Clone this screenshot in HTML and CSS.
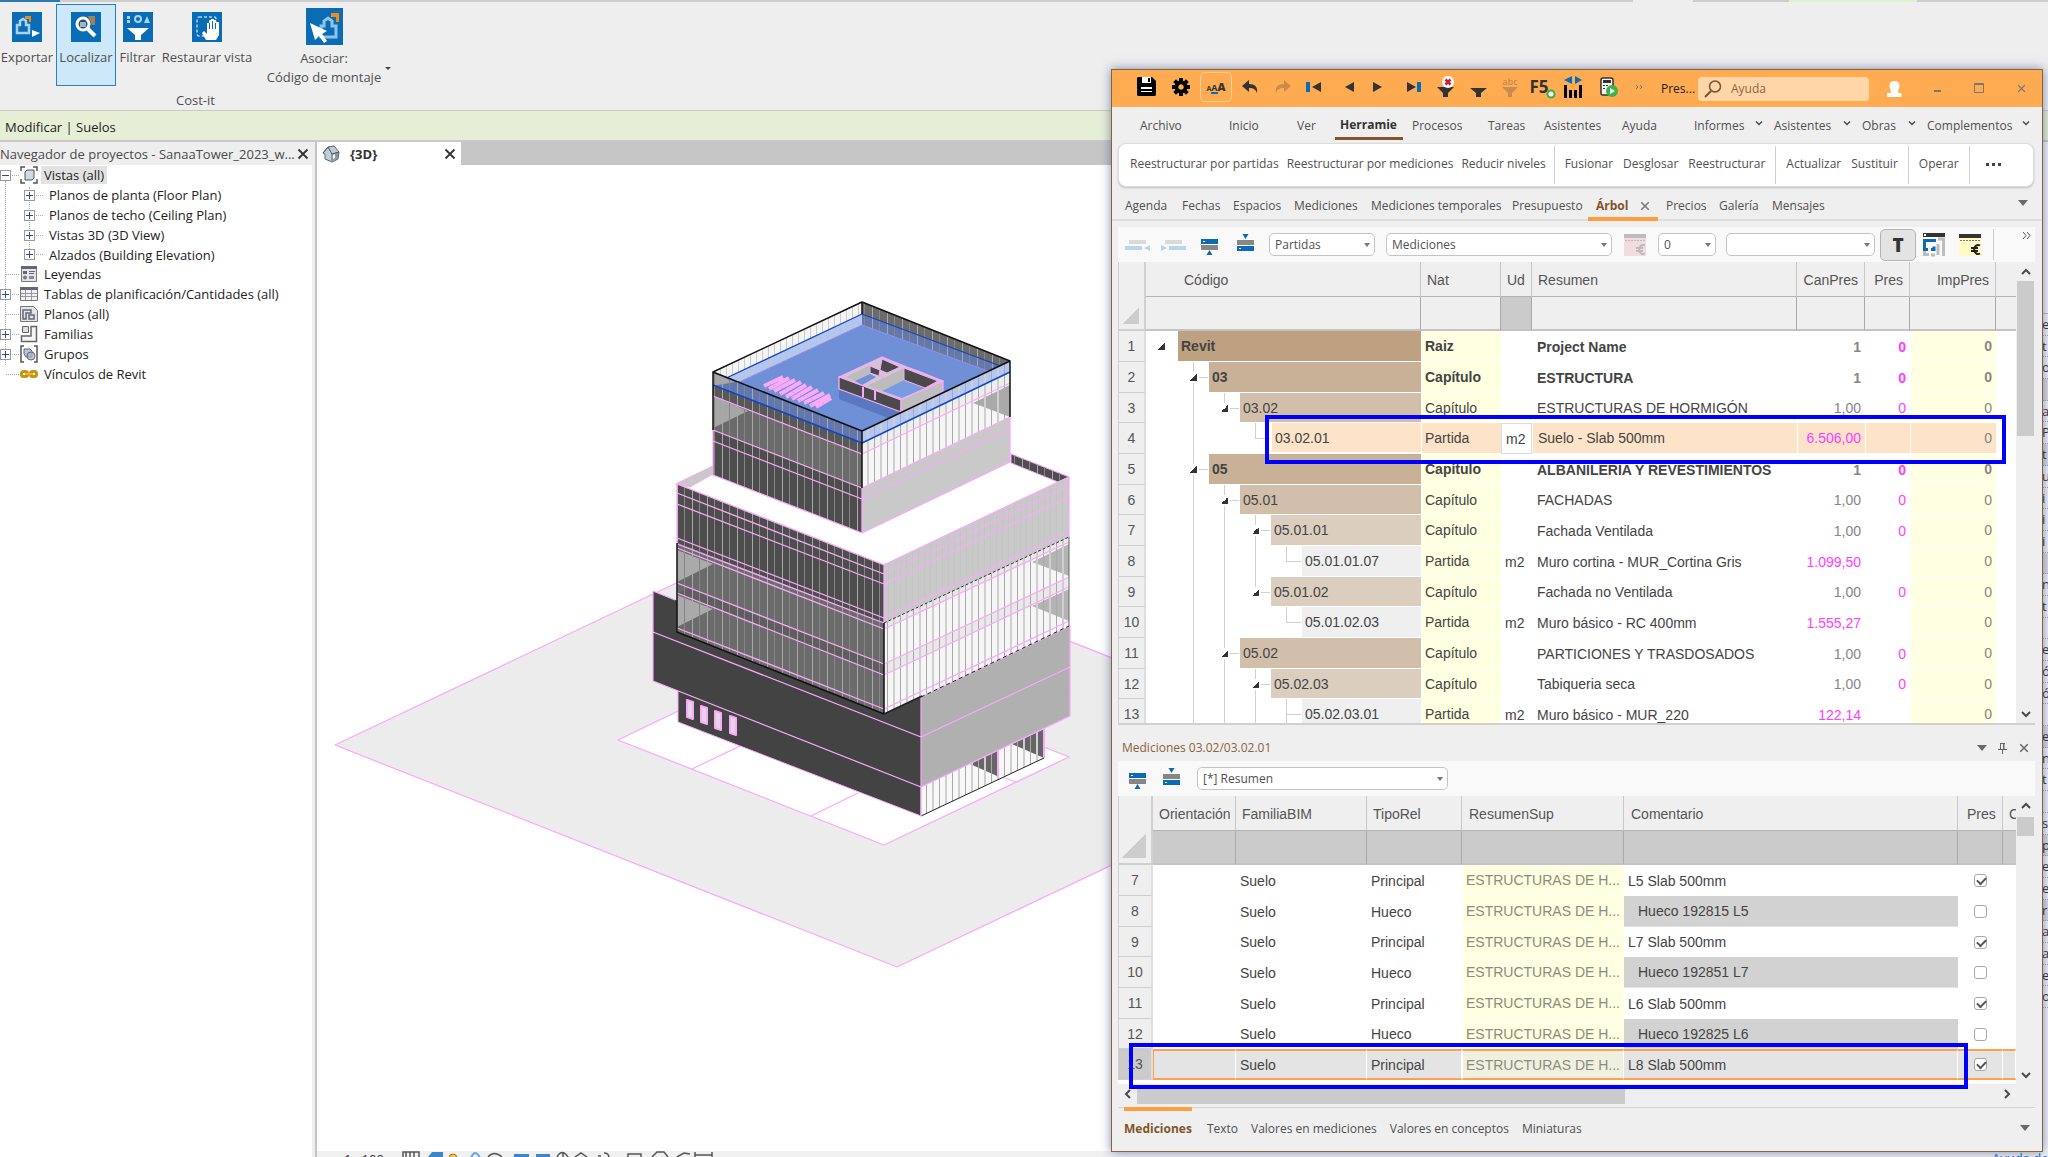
FILE: index.html
```html
<!DOCTYPE html>
<html lang="es">
<head>
<meta charset="utf-8">
<meta name="viewport" content="width=device-width, initial-scale=1">
<title>SanaaTower_2023 - Cost-it</title>
<link rel="stylesheet" href="styles.css">
</head>
<body>
<svg class="defs" aria-hidden="true">
  <defs>
    <symbol id="i-rows-up" viewBox="0 0 18 24"><path fill="#0a6cb4" d="M0 6h17v5H0zM8.500 17l3 5h-6z"/><path fill="#868686" d="M0 12h17v5H0z"/><path fill="#fff" d="M2 8h2v1H2z"/></symbol>
    <symbol id="i-rows-down" viewBox="0 0 18 24"><path fill="#0a6cb4" d="M0 13h17v5H0zM8.500 6l3-5h-6z"/><path fill="#868686" d="M0 7h17v5H0z"/><path fill="#fff" d="M2 15h2v1H2z"/></symbol>
    <symbol id="i-x" viewBox="0 0 12 12"><path d="M1.500 1.500l9 9M10.500 1.500l-9 9" fill="none" stroke="currentColor" stroke-width="1.800"/></symbol>
    <symbol id="i-up" viewBox="0 0 10 8"><path d="M1 6l4-4 4 4" fill="none" stroke="#4a4a4a" stroke-width="2"/></symbol>
    <symbol id="i-down" viewBox="0 0 10 8"><path d="M1 2l4 4 4-4" fill="none" stroke="#4a4a4a" stroke-width="2"/></symbol>
    <symbol id="i-tri" viewBox="0 0 10 6"><path d="M0 0h10L5 6z" fill="#6a6a6a"/></symbol>
  </defs>
</svg>

<div class="revit">
  <div class="topline"><span class="tl-blue"></span><span class="tl-grey"></span><span class="tl-gap"></span><span class="tl-mid"></span><span class="tl-green"></span><span class="tl-end"></span></div>
  <header class="ribbon">
    <button class="tool w56"><svg width="30" height="30" viewBox="0 0 30 30"><path fill="#0a6cb4" d="M0 0h30v30H0z"/><path fill="none" stroke="#a9d2ef" stroke-width="2.500" d="M5 21v-8h3V9l3-2 3 2v4h3v8z"/><path fill="#ef8a1d" d="M13 4h6v6h-2V7h-4z"/><path fill="#fff" d="M20 18l8 3-8 4z"/></svg>Exportar</button>
    <button class="tool w60 active"><svg width="30" height="30" viewBox="0 0 30 30"><path fill="#0a6cb4" d="M0 0h30v30H0z"/><path fill="#a3814f" d="M17 4h7v9h-3z"/><circle cx="12" cy="12" r="6" fill="#3c4a58" stroke="#fff" stroke-width="3"/><path fill="#8fb9d8" d="M9 10h6v5H9z"/><path d="M16 16l8 8" stroke="#fff" stroke-width="4"/></svg>Localizar</button>
    <button class="tool w46"><svg width="30" height="30" viewBox="0 0 30 30"><path fill="#0a6cb4" d="M0 0h30v30H0z"/><g fill="#a9d2ef"><path d="M4 4h3v3H4zM4 8h3v3H4zM24 4l3 7h-6z"/></g><circle cx="15" cy="7" r="3" fill="none" stroke="#a9d2ef" stroke-width="2"/><path fill="#fff" d="M4 16h22l-8 7v5h-6v-5z"/></svg>Filtrar</button>
    <button class="tool w98"><svg width="30" height="30" viewBox="0 0 30 30"><path fill="#0a6cb4" d="M0 0h30v30H0z"/><rect x="5" y="5" width="19" height="19" rx="2" fill="none" stroke="#a9d2ef" stroke-width="1.500" stroke-dasharray="3 2"/><path fill="#fff" d="M14 28l-4-7 2-2 3 3V11h2V8h2V7h3v1h2v2h3v13l-3 5z"/><path stroke="#0a6cb4" d="M17.500 11v6M20.500 9v8M23.500 11v6"/></svg>Restaurar vista</button>
    <button class="tool assoc"><svg width="37" height="37" viewBox="0 0 37 37"><path fill="#0a6cb4" d="M0 0h37v37H0z"/><path fill="none" stroke="#8fc3e8" stroke-width="3" d="M15 29V18h3v-5l4-3 4 3v5h4v11z"/><path fill="#ef8a1d" d="M25 5h8v9h-3V9h-5z"/><path fill="#fff" d="M4 15l17 8-5 3 5 7-3 2-5-7-4 4z"/></svg><span>Asociar:</span><span>Código de montaje</span><i></i></button>
    <div class="panel-name">Cost-it</div>
  </header>
  <div class="context">Modificar | Suelos</div>

  <div class="work">
    <aside class="browser">
      <div class="b-head"><span>Navegador de proyectos - SanaaTower_2023_w...</span><button class="xb" aria-label="Cerrar navegador"><svg width="12" height="12"><use href="#i-x"/></svg></button></div>
      <ul class="b-tree">
        <li><b class="box minus"></b><svg width="18" height="18" viewBox="0 0 18 18"><path d="M1 5V1h4M13 1h4v4M17 13v4h-4M5 17H1v-4" fill="none" stroke="#555" stroke-width="1.500"/><path d="M5 6l2-2h7v8l-2 2H5z" fill="#d4dae2" stroke="#555"/></svg><span class="sel">Vistas (all)</span></li>
        <li class="sub"><b class="box"></b><span>Planos de planta (Floor Plan)</span></li>
        <li class="sub"><b class="box"></b><span>Planos de techo (Ceiling Plan)</span></li>
        <li class="sub"><b class="box"></b><span>Vistas 3D (3D View)</span></li>
        <li class="sub"><b class="box"></b><span>Alzados (Building Elevation)</span></li>
        <li><b class="nobox"></b><svg width="18" height="18" viewBox="0 0 18 18"><path fill="#e2e4e8" stroke="#777" d="M1.500 1.500h15v15h-15z"/><path fill="#667" d="M1 1h16v3H1zM3 6h4v3H3zM9 6h6v1H9zM9 8h5v1H9z"/><circle cx="5" cy="12.500" r="2" fill="#778"/><path fill="#889" d="M9 11h5v3H9z"/></svg><span>Leyendas</span></li>
        <li><b class="box"></b><svg width="18" height="18" viewBox="0 0 18 18"><path fill="#f2f2f4" stroke="#777" d="M.5 2.500h17v13H.5z"/><path fill="#667" d="M0 2h18v3H0z"/><path stroke="#999" d="M5.500 5v10M11.500 5v10M1 8.500h16M1 11.500h16"/></svg><span>Tablas de planificación/Cantidades (all)</span></li>
        <li><b class="nobox"></b><svg width="18" height="18" viewBox="0 0 18 18"><path fill="#e2e4e8" stroke="#777" d="M.5 1.500h13l4 4v11H.5z"/><path fill="none" stroke="#667" stroke-width="1.500" d="M3 5h8v3H6v6H3zM9 14v-4h5v4z"/></svg><span>Planos (all)</span></li>
        <li><b class="box"></b><svg width="18" height="18" viewBox="0 0 18 18"><path fill="#f4f4f4" stroke="#666" stroke-width="1.500" d="M11 1.500h5.500v15h-15V11H11z"/><path fill="#dde" stroke="#666" d="M2.500 1.500h6v6h-6z"/></svg><span>Familias</span></li>
        <li><b class="box"></b><svg width="18" height="18" viewBox="0 0 18 18"><path d="M4 1H1v16h3M14 1h3v16h-3" fill="none" stroke="#555" stroke-width="1.500"/><path fill="#b8c4d4" stroke="#667" d="M4 4h6l2 2v6H6L4 9z"/><circle cx="11" cy="11" r="4" fill="#a8b4c4" fill-opacity=".7" stroke="#667"/></svg><span>Grupos</span></li>
        <li><b class="nobox last"></b><svg width="18" height="18" viewBox="0 0 18 18"><g fill="none" stroke="#c8930f" stroke-width="3"><rect x="1.500" y="6.500" width="6" height="5" rx="2"/><rect x="10.500" y="6.500" width="6" height="5" rx="2"/></g><path stroke="#e0b030" stroke-width="2" d="M5 9h8"/></svg><span>Vínculos de Revit</span></li>
      </ul>
    </aside>

    <main class="view">
      <div class="v-tabs"><div class="v-tab"><svg width="18" height="18" viewBox="0 0 18 18"><path fill="#c4ccd6" stroke="#566" d="M1 8l5-6 6-1 5 6-1 7-6 3-7-3V9z"/><path fill="#8c98a8" d="M9 9l7-2v6l-7 4z"/><path fill="#fff" d="M11 10l2-1v4l-2 1z"/><path stroke="#455" fill="none" d="M1 8l5-6 4 7 7-2"/></svg><strong>{3D}</strong><button class="xb" aria-label="Cerrar vista"><svg width="12" height="12"><use href="#i-x"/></svg></button></div></div>
      <svg class="scene" role="img" aria-label="Vista 3D del edificio">
        <defs>
          <pattern id="md" width="15" height="10" patternUnits="userSpaceOnUse" x="2"><path fill="#a8a8a8" d="M0 0h1v10H0z"/><path fill="#868686" d="M7 0h1v10H7z"/></pattern>
          <pattern id="ml" width="13" height="10" patternUnits="userSpaceOnUse" x="3"><path fill="#a9a9a9" d="M0 0h1v10H0z"/><path fill="#cfcfcf" d="M6 0h2v10H6z"/></pattern>
          <pattern id="ms" width="6" height="10" patternUnits="userSpaceOnUse"><path fill="#c2c2c2" d="M0 0h1v10H0z"/></pattern>
        </defs>
        <g transform="translate(-317 -165)" stroke-linejoin="round">
          <g stroke="#fba9fb" stroke-width="1.300">
            <path fill="#ececec" d="M335 745L788 530 1350 752 897 967z"/>
            <path fill="#fff" d="M618 740L803 651 1069 757 884 845z"/>
            <path fill="none" d="M692 769l48-23M811 816l47-23M1002 777l14 5"/>
          </g>
          <path fill="#434343" stroke="#fba9fb" d="M678 690V722L921 816V780z"/>
          <g fill="#e4d6e4" stroke="#fba9fb" stroke-width="2"><path d="M687 700l6 2v17l-6-2zM701 706l6 2v16l-6-2zM715 711l6 2v17l-6-2zM730 716l6 2v17l-6-2z"/></g>
          <path fill="#f8f8f8" d="M921 787L1044 729V758L921 816z"/>
          <path fill="#666" d="M970 764l27-14v26zM1012 744l32-15v29z"/>
          <path fill="url(#ml)" d="M921 787L1044 729V758L921 816z"/>
          <path fill="none" stroke="#fba9fb" stroke-width="2" d="M998 750v26M1044 729v29"/>
          <path fill="none" stroke="#222" d="M921 816L1044 758"/>
          <path fill="#434343" d="M653 591L921 697V787L653 681z"/>
          <path fill="#b0b0b0" d="M921 697L1070 626V716L921 787z"/>
          <path fill="none" stroke="#fba9fb" stroke-width="1.200" d="M675 600L653 591V681L921 787V697L1070 626V716L921 787V816M653 632L921 737 1070 667"/>

          <path fill="#fff" stroke="#fba9fb" stroke-width="1.300" d="M676 484L862 396 1069 477 884 565z"/>
          <path fill="#c9c9c9" stroke="#fba9fb" d="M676 484L713 466V474L690 487z"/>
          <path fill="#4d4d4d" stroke="#fba9fb" d="M1011 454L1069 477 1058 482 1011 463z"/>
          <path fill="url(#md)" d="M1011 454L1069 477 1058 482 1011 463z"/>
          <path fill="#6b6b6b" d="M677 543L884 623V714L677 632z"/>
          <path fill="#aaa" d="M677 550l36 14-36 18zM677 595l36 14-36 18z"/>
          <path fill="#5e5e5e" d="M690 588L884 664V675L677 593z"/>
          <path fill="#4d4d4d" d="M677 484L884 565V623L677 543z"/>
          <path fill="url(#md)" d="M677 484L884 565V714L677 632z"/>
          <path fill="#f6f6f6" d="M884 623L1069 537V626L884 714z"/>
          <path fill="#e9e9e9" d="M884 664L1069 577V587L884 675zM884 623L1069 537V542L884 629z"/>
          <path fill="#b4b4b4" d="M1032 562l37-18v32zM1032 606l37-17v32z"/>
          <path fill="url(#ml)" d="M884 623L1069 537V626L884 714z"/>
          <path fill="#c9c9c9" d="M884 565L1069 477V537L884 623z"/>
          <path fill="url(#ms)" opacity=".6" d="M884 565L1069 477V537L884 623z"/>
          <path fill="none" stroke="#fba9fb" stroke-width="1.300" d="M677 484L884 565 1069 477M677 493L884 574 1069 486M677 504L884 584 1069 497M677 538L884 618 1069 532M677 544L884 623M677 548L884 629 1069 542M677 583L884 664 1069 577M677 593L884 675 1069 587M677 628L884 709 1069 621M677 484V543M884 565V623M1069 477V537"/>
          <path fill="none" stroke="#111" stroke-width="1.500" d="M677 543V632L884 714V623"/>
          <path fill="none" stroke="#333" stroke-dasharray="3 2" d="M884 623L1069 537"/>
          <path fill="none" stroke="#666" d="M1069 537V626"/>
          <path fill="none" stroke="#222" stroke-width="1.500" d="M884 714l38-18"/>
          <path fill="none" stroke="#222" stroke-dasharray="4 3" d="M921 697L1069 626"/>

          <path fill="#f4f4f4" d="M713 372L862 302V325L731 387z"/>
          <path fill="#b4c6f2" d="M720 381L862 314V325L737 384z"/>
          <path fill="#6b6b6b" d="M862 302L1010 361 990 371 862 325z"/>
          <path fill="#6478ac" d="M862 314L1003 367 988 372 862 325z"/>
          <path fill="#6f8fd6" d="M862 325L737 383 862 431 988 371z"/>
          <path fill="url(#md)" d="M862 302L1010 361 990 371 862 325z"/>
          <path fill="url(#ms)" opacity=".8" d="M713 372L862 302V325L737 384z"/>
          <path fill="none" stroke="#8f8fe8" d="M862 325L737 383M862 325L988 371"/>
          <path fill="none" stroke="#1146c4" stroke-width="1.300" d="M720 381L862 314 1003 367"/>
          <path fill="none" stroke="#111" stroke-width="1.500" d="M862 302V314"/>
          <path fill="#5a78c0" d="M839 389L901 412 888 418 839 399z"/>
          <path fill="none" stroke="#fba9fb" stroke-width="4" d="M764 386l19-9M769 389l20-11M774 391l21-11M780 394l21-12M786 397l20-12M792 399l20-12M798 401l20-11M804 403l20-10M810 406l20-11M816 407l15-9"/>
          <path fill="none" stroke="#c88ad8" stroke-dasharray="1 3" d="M766 388l55 20M770 384l55 20"/>
          <path fill="#d5c3d8" stroke="#fba9fb" stroke-width="1.300" d="M839 377L882 357 907 367 918 371 943 381 901 400z"/>
          <path fill="#bcbcbc" d="M846 377L870 365V374L855 381z"/>
          <path fill="#6f8fd6" d="M855 381l15-7 6 3-14 8z"/>
          <path fill="#4a4a4a" stroke="#fba9fb" d="M882 359L900 367 887 373 870 366V373L885 378 879 375z"/>
          <path fill="#bcbcbc" d="M867 386L904 368V380L882 391z"/>
          <path fill="#7b9be0" d="M882 391L904 380 925 388 902 398z"/>
          <path fill="#4a4a4a" stroke="#fba9fb" d="M904 368L938 381 925 388 904 380z"/>
          <path fill="#4a4a4a" stroke="#fba9fb" stroke-width="1.300" d="M839 377L901 400V412L839 389z"/>
          <path fill="none" stroke="#fba9fb" stroke-width="2" d="M863 387v10M875 391v9"/>
          <path fill="#bfbfbf" stroke="#fba9fb" stroke-width="1.300" d="M901 400L943 381V392L901 412z"/>

          <path fill="#6077b0" d="M713 372L862 431V443L713 385z"/>
          <path fill="#585858" d="M713 385L862 443V454L713 396z"/>
          <path fill="#6b6b6b" d="M713 396L862 454V488L713 430z"/>
          <path fill="#a6a6a6" d="M713 396L748 411 713 428zM713 373l22 9-22 4z"/>
          <path fill="#4d4d4d" d="M713 430L862 488V533L713 475z"/>
          <path fill="url(#md)" d="M713 372L862 431V533L713 475z"/>
          <path fill="#b4c6f2" d="M862 431L1010 361V372L862 443z"/>
          <path fill="#eee" d="M862 443L1010 372V383L862 454z"/>
          <path fill="#f6f6f6" d="M862 454L1010 383V417L862 488z"/>
          <path fill="#aaa" d="M973 403L1010 385V417z"/>
          <path fill="url(#ml)" d="M862 431L1010 361V417L862 488z"/>
          <path fill="#c9c9c9" d="M862 488L1010 417V462L862 533z"/>
          <path fill="none" stroke="#fba9fb" stroke-width="1.300" d="M713 396L862 454 1010 383M713 430L862 488 1010 417M713 441L862 499 1010 429M713 475L862 533 1010 462V417M713 430V475M862 488V533"/>
          <path fill="none" stroke="#1146c4" stroke-width="1.500" d="M713 385L862 443 1010 372"/>
          <path fill="none" stroke="#111" stroke-width="1.500" d="M862 302L713 372 862 431 1010 361zM713 372V430M862 431V488M1010 361V417"/>
        </g>
      </svg>
      <footer class="v-status"><span>1 : 100</span>
        <svg width="320" height="22" viewBox="0 0 320 22"><g fill="none" stroke="#555" stroke-width="1.500"><path d="M1 1h16v12H1zM4 1v12M8 1v12M12 1v12"/><path d="M155 6q5-9 11 0M161 2v4M173 6l6-4 6 4M196 5h3M202 2q5 0 5 5M226 6V3h13v3M250 6l5-5h7l4 5M275 6l7-4 6 1M293 1v8M310 1v8M293 4h17"/><path d="M86 6q6-7 14 0" /></g><path fill="#3a86c8" d="M26 6l4-5h11v5zM112 3h15v4h-15zM134 3h14v4h-14z"/><path d="M69 7q4-10 9 0" fill="none" stroke="#6aa6dc" stroke-width="2"/><circle cx="51" cy="7" r="4" fill="#f2c14a" stroke="#a87a10"/></svg>
      </footer>
    </main>

    <aside class="props" aria-hidden="true">
      <div class="p-top"></div>
      <div class="p-rows"><p>e</p><p>t</p><p>o</p><p class="g"></p><p>a</p><p>P</p><p class="g">t</p><p>u</p><p>i</p><p>i</p><p>i</p><p class="g"></p><p>n</p><p>t</p><p></p><p>e</p><p>ó</p><p>ó</p><p></p><p class="g">e</p><p>n</p><p>t</p><p></p><p>s</p><p class="g">p</p><p>e</p><p>e</p><p class="g">r</p><p>a</p><p>a</p><p>e</p><p>o</p></div>
      <div class="p-end"></div>
    </aside>
  </div>
  <a href="#" class="help">Ayuda de</a>
</div>

<section class="presto" aria-label="Presto">
  <header class="title">
    <div class="t-set">
      <button class="tb" aria-label="Guardar"><svg width="19" height="19" viewBox="0 0 19 19"><path d="M1 0h14l4 4v14l-1 1H1l-1-1V1z"/><path fill="#fff" d="M5 0h9v6H5z"/><path d="M11 1h2v4h-2z"/><path fill="#fff" d="M4 10h11v2H4zM4 14h11v1H4z"/></svg></button>
      <button class="tb" aria-label="Opciones"><svg width="18" height="18" viewBox="0 0 18 18"><circle cx="9" cy="9" r="4.500" fill="none" stroke="#000" stroke-width="4"/><g stroke="#000" stroke-width="4"><path d="M9 0v4M9 14v4M0 9h4M14 9h4M2.600 2.600l3 3M12.400 12.400l3 3M2.600 15.400l3-3M12.400 5.600l3-3"/></g><circle cx="9" cy="9" r="2.500" fill="#ffab52"/></svg></button>
      <button class="tb framed" aria-label="Tamaño de texto"><small>A</small><em>A</em><b>A</b></button>
    </div>
    <button class="tb" aria-label="Deshacer"><svg width="17" height="14" viewBox="0 0 17 14"><path fill="#333" d="M7 0v4c6 0 9 3 8 9-1-3-3-5-8-5v4L0 6z"/></svg></button>
    <button class="tb" aria-label="Rehacer"><svg width="17" height="14" viewBox="0 0 17 14"><path fill="#c68d4c" d="M10 0v4C4 4 1 7 2 13c1-3 3-5 8-5v4l7-6z"/></svg></button>
    <button class="tb" aria-label="Primero"><svg width="16" height="10" viewBox="0 0 16 10"><path fill="#0a6cb4" d="M0 0h4v10H0z"/><path fill="#333" d="M15 0v10L6 5z"/></svg></button>
    <div class="pn"><button class="tb" aria-label="Anterior"><svg width="10" height="10" viewBox="0 0 10 10"><path fill="#333" d="M9 0v10L0 5z"/></svg></button><button class="tb" aria-label="Siguiente"><svg width="10" height="10" viewBox="0 0 10 10"><path fill="#333" d="M0 0v10l9-5z"/></svg></button></div>
    <button class="tb" aria-label="Último"><svg width="16" height="10" viewBox="0 0 16 10"><path fill="#0a6cb4" d="M11 0h4v10h-4z"/><path fill="#333" d="M1 0v10l9-5z"/></svg></button>
    <button class="tb" aria-label="Quitar filtro"><svg width="18" height="22" viewBox="0 0 18 22"><path fill="#333" d="M0 11h17l-6 6v4H6v-4z"/><circle cx="11" cy="6" r="6" fill="#fff"/><path d="M8.500 3.500l5 5M13.500 3.500l-5 5" stroke="#c8202c" stroke-width="2.600"/></svg></button>
    <button class="tb" aria-label="Filtrar"><svg width="17" height="22" viewBox="0 0 17 22"><path fill="#333" d="M0 12h17l-6 5v4H6v-4z"/></svg></button>
    <button class="tb faded" aria-label="Filtro de texto"><span>abc</span><svg width="16" height="10" viewBox="0 0 16 10"><path fill="#c68d4c" d="M0 0h16l-6 6v4H6V6z"/></svg></button>
    <button class="tb f5"><span>F5</span><svg width="10" height="10" viewBox="0 0 10 10"><circle cx="5" cy="5" r="3.500" fill="#fff" stroke="#3fae49" stroke-width="2"/></svg></button>
    <button class="tb" aria-label="Ajustar columnas"><svg width="20" height="22" viewBox="0 0 20 22"><path fill="#0a6cb4" d="M8 0v8L0 4zM11 0v8l7-4z"/><path d="M0 9h3v13H0zM5 14h3v8H5zM10 14h3v8h-3zM15 9h3v13h-3z"/></svg></button>
    <div class="pn2"><button class="tb" aria-label="Recalcular"><svg width="18" height="20" viewBox="0 0 18 20"><rect x="1" y="1" width="12" height="17" rx="2" fill="#f4f4f4" stroke="#333" stroke-width="1.500"/><path fill="#333" d="M3 3h8v3H3zM3 8h2v1H3zM6 8h2v1H6zM3 11h2v1H3z"/><circle cx="12" cy="14" r="6" fill="#3bb24a"/><path fill="#fff" d="M10 11v6l5-3z"/></svg></button></div>
    <button class="tb more" aria-label="Más"><svg width="7" height="4" viewBox="0 0 7 4"><path d="M0 0l2 2-2 2M4 0l2 2-2 2" fill="none" stroke="#777"/></svg></button>
    <span class="doc">Pres...</span>
    <label class="search"><svg width="18" height="18" viewBox="0 0 18 18"><circle cx="11" cy="6.500" r="5.500" fill="none" stroke="#7a5230" stroke-width="1.500"/><path d="M7 11l-6 6" stroke="#7a5230" stroke-width="2"/></svg><input type="text" placeholder="Ayuda" aria-label="Ayuda"></label>
    <div class="winctl">
      <button aria-label="Usuario"><svg width="15" height="16" viewBox="0 0 15 16"><path fill="#fff" d="M7.500 0q5 0 5 5 0 3-2 5l4 2v4H0v-4l4.500-2q-2-2-2-5 0-5 5-5z"/><path stroke="#ffab52" d="M0 11.500h4M11 11.500h4"/></svg></button>
      <button aria-label="Minimizar"><svg width="10" height="10" viewBox="0 0 10 10"><path fill="#777" d="M1 6h7v2H1z"/></svg></button>
      <button aria-label="Maximizar"><svg width="11" height="11" viewBox="0 0 11 11"><path fill="none" stroke="#777" d="M.5.5h9v9h-9zM.5 1.500h9"/></svg></button>
      <button aria-label="Cerrar"><svg width="9" height="9" viewBox="0 0 12 12" color="#777"><use href="#i-x"/></svg></button>
    </div>
  </header>

  <nav class="menu">
    <a href="#">Archivo</a><a href="#">Inicio</a><a href="#">Ver</a><a href="#" class="on">Herramie</a><a href="#">Procesos</a><a href="#">Tareas</a><a href="#">Asistentes</a><a href="#">Ayuda</a><a href="#" class="dd">Informes<svg width="8" height="6"><use href="#i-down"/></svg></a><a href="#" class="dd">Asistentes<svg width="8" height="6"><use href="#i-down"/></svg></a><a href="#" class="dd">Obras<svg width="8" height="6"><use href="#i-down"/></svg></a><a href="#" class="dd">Complementos<svg width="8" height="6"><use href="#i-down"/></svg></a>
  </nav>

  <div class="cmds">
    <div><button>Reestructurar por partidas</button><button>Reestructurar por mediciones</button><button>Reducir niveles</button></div>
    <div><button>Fusionar</button><button>Desglosar</button><button>Reestructurar</button></div>
    <div><button>Actualizar</button><button>Sustituir</button></div>
    <div><button>Operar</button></div>
    <div class="dots"><button aria-label="Más comandos"><svg width="16" height="4" viewBox="0 0 16 4"><path d="M0 0h3v3H0zM6 0h3v3H6zM12 0h3v3h-3z" fill="#444"/></svg></button></div>
  </div>

  <nav class="tabs">
    <a href="#">Agenda</a><a href="#">Fechas</a><a href="#">Espacios</a><a href="#">Mediciones</a><a href="#">Mediciones temporales</a><a href="#">Presupuesto</a><a href="#" class="on">Árbol<svg width="10" height="10" color="#777" viewBox="0 0 12 12"><use href="#i-x"/></svg></a><a href="#">Precios</a><a href="#">Galería</a><a href="#">Mensajes</a>
    <button class="menu-tri" aria-label="Lista de ventanas"><svg width="10" height="6"><use href="#i-tri"/></svg></button>
  </nav>

  <div class="toolbar tb1">
    <button class="ic i25" aria-label="Subir nivel"><svg width="25" height="12" viewBox="0 0 25 12"><path fill="#dadada" d="M4 1h17v4H4z"/><path fill="#b9d6ea" d="M0 7h17v4H0zM25 6v6l-6-3z"/></svg></button>
    <button class="ic i25" aria-label="Bajar nivel"><svg width="25" height="12" viewBox="0 0 25 12"><path fill="#dadada" d="M4 1h17v4H4z"/><path fill="#b9d6ea" d="M8 7h17v4H8zM0 6v6l6-3z"/></svg></button>
    <button class="ic i18" aria-label="Insertar debajo"><svg width="18" height="24"><use href="#i-rows-up"/></svg></button>
    <button class="ic i18" aria-label="Insertar encima"><svg width="18" height="24"><use href="#i-rows-down"/></svg></button>
    <label class="sel s106"><select aria-label="Tipo"><option>Partidas</option></select></label>
    <label class="sel s226"><select aria-label="Vista"><option>Mediciones</option></select></label>
    <button class="ic i22" aria-label="Importe"><svg width="22" height="22" viewBox="0 0 22 22"><path fill="#f3dcdf" d="M0 0h22v22H0z"/><path fill="#bdbdbd" d="M0 0h22v4H0z"/><path stroke="#bbb" stroke-dasharray="2 1" d="M1 6.500h20"/><path d="M21 11.500a4 4.500 0 1 0 0 8M12 14h7M12 17h7" fill="none" stroke="#bbb" stroke-width="2"/></svg></button>
    <label class="sel s58"><select aria-label="Decimales"><option>0</option></select></label>
    <label class="sel flexy"><select aria-label="Filtro"><option></option></select></label>
    <button class="tbtn" aria-pressed="true">T</button>
    <button class="ic i22" aria-label="Plano"><svg width="22" height="24" viewBox="0 0 22 24"><path fill="#333" d="M0 0h22v4H0z"/><path fill="#fff" d="M1 1h2v2H1z"/><path fill="none" stroke="#bdbdbd" stroke-width="3" d="M1.500 14v9M0 21.500h6M15 6h5.500v17M8 22h4M15 22V11"/><path fill="none" stroke="#0a6cb4" stroke-width="3" d="M13 7.500H1.500v9H5M11 6v3M8 16.500h3v-3"/></svg></button>
    <button class="ic i22" aria-label="Divisa"><svg width="22" height="22" viewBox="0 0 22 22"><path fill="#fffbc4" d="M0 0h22v22H0z"/><path fill="#333" d="M0 0h22v4H0z"/><path stroke="#777" stroke-dasharray="2 1" d="M1 6.500h20"/><path d="M21 11.500a4 4.500 0 1 0 0 8M12 14h7M12 17h7" fill="none" stroke="#222" stroke-width="2"/></svg></button>
    <span class="vsep"></span>
    <button class="ic chev" aria-label="Más herramientas"><svg width="10" height="7" viewBox="0 0 10 7"><path d="M1 0l3 3.500L1 7M5 0l3 3.500L5 7" fill="none" stroke="#555"/></svg></button>
  </div>

  <div class="gridwrap g1">
    <div class="clip">
    <table class="grid tree">
      <colgroup><col class="c28"><col class="c275"><col class="c80"><col class="c31"><col><col class="c68"><col class="c45"><col class="c86"><col class="c20"></colgroup>
      <thead>
        <tr><th rowspan="2" class="corner"></th><th class="cod">Código</th><th>Nat</th><th>Ud</th><th>Resumen</th><th class="r">CanPres</th><th class="r">Pres</th><th class="r">ImpPres</th><th class="nb"></th></tr>
        <tr class="filter"><td></td><td></td><td class="dk"></td><td></td><td></td><td></td><td></td><td class="nb"></td></tr>
      </thead>
      <tbody>
        <tr class="bold"><th>1</th><td><div class="tr"><i class="s0 ex root"></i><span class="l0">Revit</span></div></td><td class="y">Raiz</td><td></td><td>Project Name</td><td class="n">1</td><td class="p">0</td><td class="y n">0</td><td></td></tr>
        <tr class="bold"><th>2</th><td><div class="tr"><i class="s0"></i><i class="ex v"></i><span class="l1">03</span></div></td><td class="y">Capítulo</td><td></td><td>ESTRUCTURA</td><td class="n">1</td><td class="p">0</td><td class="y n">0</td><td></td></tr>
        <tr><th>3</th><td><div class="tr"><i class="s0"></i><i class="v"></i><i class="ex u"></i><span class="l2">03.02</span></div></td><td class="y">Capítulo</td><td></td><td>ESTRUCTURAS DE HORMIGÓN</td><td class="n">1,00</td><td class="p">0</td><td class="y n">0</td><td></td></tr>
        <tr class="cur"><th>4</th><td><div class="tr"><i class="s0"></i><i class="v"></i><i></i><i class="h u"></i><span class="l4">03.02.01</span></div></td><td class="y">Partida</td><td class="ud">m2</td><td>Suelo - Slab 500mm</td><td class="p">6.506,00</td><td class="p"></td><td class="y n">0</td><td class="end"></td></tr>
        <tr class="bold"><th>5</th><td><div class="tr"><i class="s0"></i><i class="ex v"></i><span class="l1">05</span></div></td><td class="y">Capítulo</td><td></td><td>ALBANILERIA Y REVESTIMIENTOS</td><td class="n">1</td><td class="p">0</td><td class="y n">0</td><td></td></tr>
        <tr><th>6</th><td><div class="tr"><i class="s0"></i><i class="v"></i><i class="ex v"></i><span class="l2">05.01</span></div></td><td class="y">Capítulo</td><td></td><td>FACHADAS</td><td class="n">1,00</td><td class="p">0</td><td class="y n">0</td><td></td></tr>
        <tr><th>7</th><td><div class="tr"><i class="s0"></i><i class="v"></i><i class="v"></i><i class="ex v"></i><span class="l3">05.01.01</span></div></td><td class="y">Capítulo</td><td></td><td>Fachada Ventilada</td><td class="n">1,00</td><td class="p">0</td><td class="y n">0</td><td></td></tr>
        <tr><th>8</th><td><div class="tr"><i class="s0"></i><i class="v"></i><i class="v"></i><i class="v"></i><i class="h u"></i><span class="l4">05.01.01.07</span></div></td><td class="y">Partida</td><td>m2</td><td>Muro cortina - MUR_Cortina Gris</td><td class="p">1.099,50</td><td></td><td class="y n">0</td><td></td></tr>
        <tr><th>9</th><td><div class="tr"><i class="s0"></i><i class="v"></i><i class="v"></i><i class="ex u"></i><span class="l3">05.01.02</span></div></td><td class="y">Capítulo</td><td></td><td>Fachada no Ventilada</td><td class="n">1,00</td><td class="p">0</td><td class="y n">0</td><td></td></tr>
        <tr><th>10</th><td><div class="tr"><i class="s0"></i><i class="v"></i><i class="v"></i><i></i><i class="h u"></i><span class="l4">05.01.02.03</span></div></td><td class="y">Partida</td><td>m2</td><td>Muro básico - RC 400mm</td><td class="p">1.555,27</td><td></td><td class="y n">0</td><td></td></tr>
        <tr><th>11</th><td><div class="tr"><i class="s0"></i><i class="v"></i><i class="ex v"></i><span class="l2">05.02</span></div></td><td class="y">Capítulo</td><td></td><td>PARTICIONES Y TRASDOSADOS</td><td class="n">1,00</td><td class="p">0</td><td class="y n">0</td><td></td></tr>
        <tr><th>12</th><td><div class="tr"><i class="s0"></i><i class="v"></i><i class="v"></i><i class="ex v"></i><span class="l3">05.02.03</span></div></td><td class="y">Capítulo</td><td></td><td>Tabiqueria seca</td><td class="n">1,00</td><td class="p">0</td><td class="y n">0</td><td></td></tr>
        <tr><th>13</th><td><div class="tr"><i class="s0"></i><i class="v"></i><i class="v"></i><i class="v"></i><i class="h v"></i><span class="l4">05.02.03.01</span></div></td><td class="y">Partida</td><td>m2</td><td>Muro básico - MUR_220</td><td class="p">122,14</td><td></td><td class="y n">0</td><td></td></tr>
      </tbody>
    </table>
    </div>
    <div class="vscroll"><button aria-label="Subir"><svg width="10" height="8"><use href="#i-up"/></svg></button><span class="thumb t1"></span><button class="dn" aria-label="Bajar"><svg width="10" height="8"><use href="#i-down"/></svg></button></div>
    <div class="mark m1"></div>
  </div>

  <div class="subhead"><span>Mediciones 03.02/03.02.01</span>
    <button aria-label="Menú"><svg width="10" height="6"><use href="#i-tri"/></svg></button><button aria-label="Fijar"><svg width="9" height="11" viewBox="0 0 9 11"><path d="M2.500 0v6M6 0v6M2 .5h5M0 6.500h9M4.500 7v4M5.500 0v6" fill="none" stroke="#666"/></svg></button><button aria-label="Cerrar mediciones"><svg width="10" height="10" viewBox="0 0 12 12" color="#666"><use href="#i-x"/></svg></button>
  </div>
  <div class="toolbar tb2">
    <button class="ic i18" aria-label="Insertar línea debajo"><svg width="18" height="24"><use href="#i-rows-up"/></svg></button>
    <button class="ic i18" aria-label="Insertar línea encima"><svg width="18" height="24"><use href="#i-rows-down"/></svg></button>
    <label class="sel s250"><select aria-label="Esquema"><option>[*] Resumen</option></select></label>
  </div>

  <div class="gridwrap g2">
    <div class="clip">
    <table class="grid med">
      <colgroup><col class="c35"><col class="c83"><col class="c131"><col class="c95"><col class="c162"><col><col class="c45"><col class="c13"></colgroup>
      <thead>
        <tr><th rowspan="2" class="corner"></th><th>Orientación</th><th>FamiliaBIM</th><th>TipoRel</th><th>ResumenSup</th><th>Comentario</th><th>Pres</th><th class="nb">C</th></tr>
        <tr class="filter all"><td></td><td></td><td></td><td></td><td></td><td></td><td class="nb"></td></tr>
      </thead>
      <tbody>
        <tr><th>7</th><td></td><td>Suelo</td><td>Principal</td><td class="y e">ESTRUCTURAS DE H...</td><td>L5 Slab 500mm</td><td class="k"><input type="checkbox" checked aria-label="Pres 7"></td><td></td></tr>
        <tr><th>8</th><td></td><td>Suelo</td><td>Hueco</td><td class="y e">ESTRUCTURAS DE H...</td><td class="hu">Hueco 192815 L5</td><td class="k"><input type="checkbox" aria-label="Pres 8"></td><td></td></tr>
        <tr><th>9</th><td></td><td>Suelo</td><td>Principal</td><td class="y e">ESTRUCTURAS DE H...</td><td>L7 Slab 500mm</td><td class="k"><input type="checkbox" checked aria-label="Pres 9"></td><td></td></tr>
        <tr><th>10</th><td></td><td>Suelo</td><td>Hueco</td><td class="y e">ESTRUCTURAS DE H...</td><td class="hu">Hueco 192851 L7</td><td class="k"><input type="checkbox" aria-label="Pres 10"></td><td></td></tr>
        <tr><th>11</th><td></td><td>Suelo</td><td>Principal</td><td class="y e">ESTRUCTURAS DE H...</td><td>L6 Slab 500mm</td><td class="k"><input type="checkbox" checked aria-label="Pres 11"></td><td></td></tr>
        <tr><th>12</th><td></td><td>Suelo</td><td>Hueco</td><td class="y e">ESTRUCTURAS DE H...</td><td class="hu">Hueco 192825 L6</td><td class="k"><input type="checkbox" aria-label="Pres 12"></td><td></td></tr>
        <tr class="now"><th>13</th><td></td><td>Suelo</td><td>Principal</td><td class="y e">ESTRUCTURAS DE H...</td><td>L8 Slab 500mm</td><td class="k"><input type="checkbox" checked aria-label="Pres 13"></td><td></td></tr>
      </tbody>
    </table>
    </div>
    <div class="vscroll"><button aria-label="Subir mediciones"><svg width="10" height="8"><use href="#i-up"/></svg></button><span class="thumb t2"></span><button class="dn" aria-label="Bajar mediciones"><svg width="10" height="8"><use href="#i-down"/></svg></button></div>
    <div class="mark m2"></div>
  </div>
  <div class="hscroll"><button aria-label="Izquierda"><svg width="8" height="10" viewBox="0 0 8 10"><path d="M6 1L2 5l4 4" fill="none" stroke="#4a4a4a" stroke-width="2"/></svg></button><span class="hthumb"></span><button class="rt" aria-label="Derecha"><svg width="8" height="10" viewBox="0 0 8 10"><path d="M2 1l4 4-4 4" fill="none" stroke="#4a4a4a" stroke-width="2"/></svg></button></div>
  <nav class="btabs"><a href="#" class="on">Mediciones</a><a href="#">Texto</a><a href="#">Valores en mediciones</a><a href="#">Valores en conceptos</a><a href="#">Miniaturas</a><button class="menu-tri" aria-label="Lista de pestañas"><svg width="10" height="6"><use href="#i-tri"/></svg></button></nav>
</section>
</body>
</html>
```
FILE: styles.css
```css
* { box-sizing: border-box; }
html, body { height: 100%; margin: 0; }
body { font: 13px/16px "Open Sans", "Noto Sans", sans-serif; color: #333; background: #eee; overflow: hidden; position: relative; }
button { font: inherit; color: inherit; background: none; border: 0; padding: 0; margin: 0; display: flex; align-items: center; justify-content: center; }
a { color: inherit; text-decoration: none; }
svg { display: block; flex: none; }
.defs { position: absolute; width: 0; height: 0; }

/* Revit shell */
.revit { height: 100%; display: flex; flex-direction: column; position: relative; overflow: hidden; }
.topline { display: flex; height: 2px; background: #cdcdcd; }
.tl-blue { width: 60px; background: #2a78b4; }
.tl-grey { flex: 1573; }
.tl-gap { width: 60px; background: #eee; }
.tl-mid { width: 96px; }
.tl-green { width: 128px; background: #e3efd2; }
.tl-end { width: 131px; }
.ribbon { display: grid; grid-template-columns: 56px 60px 43px 96px 162px; grid-template-rows: 82px 26px; padding-top: 2px; height: 108px; background: #eee; color: #505050; }
.tool { flex-direction: column; justify-content: flex-start; padding-top: 7px; gap: 7px; white-space: nowrap; border: 1px solid transparent; }
.tool.w56 { padding-right: 2px; }
.tool.active { background: #cce8f9; border-color: #2a80c8; }
.tool.assoc { gap: 0; padding-top: 3px; padding-right: 24px; line-height: 19px; position: relative; }
.assoc svg { margin-bottom: 4px; }
.assoc i { position: absolute; right: 25px; top: 62px; border: 3px solid transparent; border-top-color: #444; }
.panel-name { grid-column: 1 / 5; padding: 6px 0 0 176px; }
.context { height: 32px; padding: 8px 5px; background: #e6efd6; border-top: 1px solid #c9c9c9; border-bottom: 2px solid #c9c9c9; color: #222; }
.work { flex: 1; display: flex; min-height: 0; }
.browser { width: 317px; background: #fff; border-right: 2px solid #c4c4c4; box-shadow: inset -3px 0 #eee; }
.b-head { display: flex; align-items: center; justify-content: space-between; height: 23px; padding-right: 4px; background: #eee; color: #4a4a4a; white-space: nowrap; }
.xb { width: 16px; height: 16px; color: #333; }
.b-tree { list-style: none; margin: 0; padding: 0; color: #222; position: relative; }
.b-tree::before { content: ""; position: absolute; left: 5px; top: 16px; height: 184px; border-left: 1px dotted #aaa; }
.b-tree::after { content: ""; position: absolute; left: 29px; top: 22px; height: 70px; border-left: 1px dotted #aaa; }
.b-tree li { display: flex; align-items: center; height: 20px; position: relative; z-index: 1; }
.b-tree li:nth-child(5) { height: 19px; }
.b-tree li > span { padding: 1px 3px; margin-left: 3px; white-space: nowrap; }
.b-tree li.sub { padding-left: 24px; }
.b-tree li.sub > span { margin-left: 11px; }
.b-tree .sel { background: #e2e2e2; }
.box { width: 11px; height: 11px; margin-right: 9px; border: 1px solid #999; background: linear-gradient(#2e4f8f, #2e4f8f) 1px 4px / 7px 1px no-repeat, linear-gradient(#2e4f8f, #2e4f8f) 4px 1px / 1px 7px no-repeat, #fff; position: relative; }
.box.minus { background: linear-gradient(#2e4f8f, #2e4f8f) 1px 4px / 7px 1px no-repeat, #fff; }
.sub .box { margin-right: 0; }
.box::after { content: ""; position: absolute; left: 11px; top: 4px; width: 7px; border-top: 1px dotted #aaa; }
.nobox { width: 13px; margin: 0 1px 0 6px; border-top: 1px dotted #aaa; }
.view { flex: 1; display: flex; flex-direction: column; min-width: 0; background: #fff; }
.v-tabs { height: 23px; background: #c6c6c6; }
.v-tab { width: 144px; height: 23px; display: flex; align-items: center; padding: 0 3px 0 5px; background: #fff; color: #333; }
.v-tab strong { margin-left: 10px; flex: 1; }
.scene { flex: 1; width: 100%; min-height: 0; }
.v-status { height: 6px; display: flex; align-items: flex-start; overflow: hidden; background: #f0f0f0; padding-left: 27px; gap: 13px; }
.v-status span { width: 45px; }
.help { position: absolute; right: 0; bottom: -9px; width: 56px; white-space: nowrap; overflow: hidden; color: #1f6fc4; font-size: 13px; line-height: 16px; }
.props { width: 6px; display: flex; flex-direction: column; overflow: hidden; background: #f3f3f7; color: #333; }
.p-top { height: 172px; background: #f3f3f7; border-bottom: 1px solid #bbb; }
.p-rows { flex: 694; display: flex; flex-direction: column; overflow: hidden; }
.p-rows p { flex: 1; margin: 0; border-bottom: 1px dotted #aaa; line-height: 20px; overflow: hidden; }
.p-rows .g { background: #dcdce0; }
.p-end { flex: 149; }

/* Presto window, floating over the Revit shell */
.presto { position: absolute; left: 1111px; right: 5px; top: 69px; bottom: 5px; display: flex; flex-direction: column; border: 1px solid #8a6238; background: #efefef; box-shadow: 0 0 10px rgba(50, 70, 130, .6); font-size: 12px; color: #505050; }
.title { display: flex; align-items: center; height: 37px; padding-left: 18px; background: #ffab52; }
.t-set { display: flex; gap: 3px; margin-right: 2px; }
.tb { width: 32px; height: 30px; flex: none; margin-bottom: 4px; }
.framed { border: 1px solid #f5cfa2; border-radius: 5px; align-items: baseline; padding-top: 6px; color: #333; font-weight: 700; }
.framed small { font-size: 7px; }
.framed em { font-size: 9px; font-style: normal; border-bottom: 2px solid #0a6cb4; line-height: 9px; }
.framed b { font-size: 11px; }
.pn { display: flex; margin: 0 6px; }
.pn .tb, .more { width: 28px; }
.pn2 { margin-left: 3px; }
.faded { flex-direction: column; color: #c68d4c; font-size: 9px; line-height: 10px; font-weight: 600; }
.f5 { font-weight: 700; font-size: 17px; color: #333; position: relative; padding-right: 6px; }
.f5 svg { position: absolute; right: 2px; bottom: 3px; }
.doc { width: 37px; margin-left: 8px; color: #222; white-space: nowrap; }
.search { display: flex; align-items: center; gap: 9px; flex: 1; height: 24px; padding: 0 6px; background: #ffd6a8; border-radius: 4px; }
.search input { width: 100%; min-width: 0; border: 0; padding: 0; background: none; font: inherit; outline: 0; }
.search input::placeholder { color: #8a6844; opacity: 1; }
.winctl { display: grid; grid-template-columns: 46px 41px 42px 42px; padding-left: 2px; }

.menu { display: grid; grid-template-columns: 89px 68px 38px 77px 76px 56px 78px 72px 80px 88px 65px 1fr; height: 36px; padding: 1px 12px 0 28px; align-items: center; white-space: nowrap; }
.menu .on { align-self: end; justify-self: start; width: 68px; height: 24px; padding: 1px 0 0 5px; line-height: 16px; font-weight: 700; color: #333; border-bottom: 3px solid #80552a; margin-bottom: 3px; overflow: hidden; }
.menu .dd { display: flex; justify-content: space-between; align-items: flex-start; padding-right: 11px; }
.menu .dd:last-child { padding-right: 0; }
.menu .dd svg { margin-top: 2px; }

.cmds { display: flex; align-items: center; height: 44px; margin: 0 8px 0 6px; background: #fff; border: 1px solid #dcdcdc; border-radius: 8px; box-shadow: 0 1px 2px #bbb; }
.cmds div { display: flex; align-items: center; gap: 10px; height: 38px; padding: 0 10px 2px 10px; white-space: nowrap; border-left: 1px solid #cfcfcf; }
.cmds div:first-child { border: 0; padding-left: 11px; padding-right: 8px; gap: 8px; }
.cmds .dots { padding-left: 16px; padding-top: 2px; }

.tabs { display: grid; grid-template-columns: 57px 51px 61px 77px 141px 76px 78px 53px 53px 1fr 20px; height: 34px; padding: 0 9px 0 13px; border-bottom: 2px solid #dedede; align-items: stretch; white-space: nowrap; }
.tabs a { padding-top: 11px; }
.tabs .on { display: flex; width: 70px; padding-left: 8px; gap: 12px; font-weight: 700; color: #80552a; border-bottom: 4px solid #ff9e40; margin-bottom: -2px; }
.tabs .on svg { margin-top: 3px; }
.menu-tri { margin-left: auto; width: 20px; }

.toolbar { display: flex; align-items: center; height: 35px; margin: 0 7px 0 6px; background: #f9f9f9; }
.tb1 { margin-top: 6px; padding-left: 7px; }
.tb2 { padding-left: 11px; gap: 16px; }
.ic { flex: none; height: 24px; }
.i25 { width: 25px; margin-right: 11px; }
.i18 { width: 18px; }
.i25 + .i18 { margin-left: 4px; margin-right: 18px; }
.s106 { width: 106px; margin: 0 11px 0 14px; }
.s226 { flex: 226; margin-right: 12px; }
.s58 { width: 58px; margin: 0 10px 0 12px; }
.flexy { flex: 149; margin-right: 5px; }
.s250 { width: 251px; }
label.sel { position: relative; display: block; height: 23px; }
label.sel select { appearance: none; width: 100%; height: 23px; padding: 0 5px; font: inherit; color: inherit; background: #fff; border: 1px solid #c4c4c4; border-radius: 5px; }
label.sel::after { content: ""; position: absolute; right: 5px; top: 10px; border: 3px solid transparent; border-top: 4px solid #777; }
.tbtn { width: 36px; height: 32px; margin-right: 7px; font-size: 19px; font-weight: 800; color: #333; background: #e3e3e3; border: 1px solid #b4b4b4; border-radius: 5px; }
.tbtn + .ic { margin-right: 14px; }
.vsep { width: 1px; height: 31px; background: #ccc; margin-left: 12px; }
.chev { margin: 0 3px 18px 28px; height: 8px; }

/* data grids */
.gridwrap { position: relative; display: flex; margin: 0 7px 0 6px; border: 1px solid #d0d0d0; border-width: 0 0 2px 0; }
.g1 { height: 463px; }
.g2 { height: 288px; border: 0; }
.clip { flex: 1; min-width: 0; overflow: hidden; background: #fff; }
.grid { width: 100%; table-layout: fixed; border-collapse: separate; border-spacing: 0; font: 14px/20px "Liberation Sans", Arial, sans-serif; color: #444; }
.c13 { width: 13px; } .c20 { width: 20px; } .c28 { width: 28px; } .c31 { width: 31px; } .c35 { width: 35px; } .c45 { width: 45px; } .c68 { width: 68px; }
.c80 { width: 80px; } .c83 { width: 83px; } .c86 { width: 86px; } .c95 { width: 95px; } .c131 { width: 131px; } .c162 { width: 162px; } .c275 { width: 275px; }
.grid th { font-weight: 400; padding: 0; }
.grid td { padding: 0 5px; white-space: nowrap; overflow: hidden; height: var(--h); }
.grid thead th { height: 35px; padding: 2px 6px 0; text-align: left; color: #555; background: #efefef; border-right: 1px solid #c8c8c8; border-bottom: 1px solid #b4b4b4; white-space: nowrap; overflow: hidden; }
.grid thead .r { text-align: right; padding-right: 6px; }
.grid thead .cod { padding-left: 38px; }
.grid thead .corner { border: 1px solid #d0d0d0; border-width: 0 2px 2px 1px; background: linear-gradient(135deg, #efefef 50%, #cdcdcd 50%) right 5px bottom 5px / 17px 17px no-repeat, #efefef; }
.med thead .corner { background-size: 24px 24px; }
.grid .filter td { height: 34px; background: #efefef; border-right: 1px solid #a9a9a9; border-bottom: 2px solid #c4c4c4; }
.grid .filter .dk, .grid .all td { background: #cbcbcb; }
.grid thead .nb { border-right: 0; padding-right: 0; }
.grid tbody tr { --h: 31px; }
.grid tbody tr:nth-child(3n) { --h: 30px; }
.grid tbody th { height: var(--h); color: #555; background: #efefef; border-right: 2px solid #dedede; border-left: 1px solid #d0d0d0; border-bottom: 1px solid #cfcfcf; text-align: center; }
.grid .y { background: #ffffe1; border-bottom: 1px solid #fffff4; border-left: 1px solid #fff; }
.tree td:nth-child(2) { padding: 0; }
.tree td:nth-child(4) { padding: 0 4px; }
.tree .y { padding-left: 3px; }
.n { text-align: right; color: #868686; }
.p { text-align: right; color: #ff3cff; }
.tree .n, .tree .p { padding-right: 4px; }
.bold { font-weight: 700; }
.tr { display: flex; height: var(--h); }
.tr span { flex: 1; margin-bottom: 1px; padding-left: 3px; line-height: 30px; }
.l0 { background: #bda181; } .l1 { background: #c8b197; } .l2 { background: #d2bfab; } .l3 { background: #dbcebf; } .l4 { background: #efefef; }
.tr i { width: 31px; flex: none; position: relative; }
.tr .s0 { width: 32px; }
.tr .v { background: linear-gradient(#d0d0d0, #d0d0d0) 15px 0 / 1px 100% no-repeat; }
.tr .u { background: linear-gradient(#d0d0d0, #d0d0d0) 15px 0 / 1px 50% no-repeat; }
.tr .ex::before, .tr .h::before { content: ""; position: absolute; left: 15px; right: 1px; top: 15px; border-top: 1px solid #d0d0d0; }
.tr .root::before { display: none; }
.tr .ex::after { content: ""; position: absolute; left: 10px; top: 10px; width: 11px; height: 11px; background: linear-gradient(135deg, transparent 50%, #333 50%) 2px 2px / 7px 7px no-repeat, #fff; }
.cur th { background: #cbcbcb; }
.cur td, .cur .l4, .cur .y { background: #fde4c8; border-left: 1px solid #fff; border-bottom: 1px solid #fff; }
.cur td:nth-child(2), .cur .end { background: #fff; border: 0; }
.cur .ud { background: #fff; border: 1px solid #dcdcdc; }
.med tbody td { padding-left: 4px; }
.med tbody .e { color: #8c8c7c; padding: 0 0 0 3px; }
.med tbody .hu { background: #d2d2d2; padding-left: 14px; border-bottom: 1px solid #e2e2e2; }
.med thead th:nth-child(5), .med thead th:nth-child(6) { padding-left: 7px; }
.med thead th:nth-child(7) { padding-left: 9px; }
.med tbody .k { padding: 0; }
.med .now td { background: #e4e4e4; border-top: 2px solid #ffa04a; border-bottom: 2px solid #ffa04a; border-right: 1px solid #fff; }
.med .now .y { background: #f0f0e0; }
.med .now td:nth-child(2) { border-left: 1px solid #ffa04a; }
.med .now th { background: #cbcbcb; }
.k input { appearance: none; display: block; width: 13px; height: 13px; margin: 0 auto; border: 1px solid #a8a8a8; border-radius: 3px; background: #fff; position: relative; }
.k input:checked::after { content: ""; position: absolute; left: 2px; top: 2px; width: 7px; height: 4px; border: solid #555; border-width: 0 0 2px 2px; transform: rotate(-45deg); }
.vscroll { width: 19px; display: flex; flex-direction: column; background: #efefef; }
.vscroll button { height: 19px; }
.vscroll .dn { margin-top: auto; }
.thumb { background: #cbcbcb; margin: 0 1px; }
.t1 { height: 155px; }
.t2 { height: 19px; margin-top: 2px; }
.mark { position: absolute; border: 4px solid #0000ff; }
.m1 { left: 147px; right: 29px; top: 153px; height: 49px; }
.m2 { left: 11px; right: 67px; top: 247px; height: 46px; }
.subhead { display: flex; align-items: center; height: 36px; padding: 10px 8px 0 10px; color: #8a643c; }
.subhead span { flex: 1; }
.subhead button { width: 21px; height: 16px; }
.hscroll { display: flex; align-items: center; height: 20px; margin: 0 26px 0 6px; background: #efefef; }
.hscroll button { flex: none; width: 19px; height: 19px; }
.hthumb { width: 488px; height: 19px; background: #cbcbcb; }
.hscroll .rt { margin-left: auto; }
.btabs { display: flex; margin: 3px 7px 0 6px; padding: 0 0 0 6px; border-top: 1px solid #d4d4d4; flex: 1; gap: 13px; white-space: nowrap; }
.btabs a { padding-top: 13px; }
.btabs .on { font-weight: 700; color: #80552a; border-top: 4px solid #ff9e40; margin: -1px 2px 0 0; padding-top: 10px; }
.btabs .menu-tri { margin-bottom: 4px; }
```
